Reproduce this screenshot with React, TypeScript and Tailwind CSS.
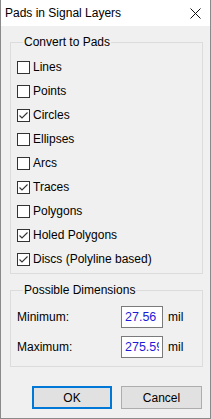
import React from 'react';

const font = { fontFamily: '"Liberation Sans", Arial, sans-serif' };

const options: { label: string; checked: boolean }[] = [
  { label: 'Lines', checked: false },
  { label: 'Points', checked: false },
  { label: 'Circles', checked: true },
  { label: 'Ellipses', checked: false },
  { label: 'Arcs', checked: false },
  { label: 'Traces', checked: true },
  { label: 'Polygons', checked: false },
  { label: 'Holed Polygons', checked: true },
  { label: 'Discs (Polyline based)', checked: true },
];

const CheckBox: React.FC<{ checked: boolean }> = ({ checked }) => (
  <span className="w-[13px] h-[13px] border border-[#333333] bg-white flex items-center justify-center shrink-0">
    {checked && (
      <svg width="11" height="11" viewBox="0 0 11 11">
        <path d="M1.5 5.5 L4 8 L9.5 2.5" fill="none" stroke="#333333" strokeWidth="1.1" />
      </svg>
    )}
  </span>
);

const DimRow: React.FC<{ label: string; value: string }> = ({ label, value }) => (
  <div className="flex items-center h-[22px]">
    <span className="w-[104px] text-[12px] text-black">{label}</span>
    <div className="w-[42px] h-[22px] border border-[#7a7a7a] bg-white flex items-center">
      <div className="ml-[3px] w-[34px] overflow-hidden whitespace-nowrap text-[12.5px] text-[#1c1cd6]">{value}</div>
    </div>
    <span className="ml-[5px] text-[12px] text-black">mil</span>
  </div>
);

export default function App() {
  return (
    <div
      className="w-[211px] h-[419px] flex flex-col border-x border-b border-[#8a8a8a] bg-[#f0f0f0] select-none"
      style={font}
    >
      {/* title bar */}
      <div className="h-[26px] bg-white flex items-center justify-between pl-[4px] pr-[9px] shrink-0">
        <span className="text-[12px] text-black">Pads in Signal Layers</span>
        <svg width="11" height="11" viewBox="0 0 11 11">
          <path d="M0.5 0.5 L10.5 10.5 M10.5 0.5 L0.5 10.5" stroke="#111" strokeWidth="1" />
        </svg>
      </div>

      <fieldset className="mt-[8px] ml-[9px] mr-[7px] border border-[#dcdcdc] pl-[6px] pb-[2px]">
        <legend className="ml-[6px] px-[1px] text-[12px] leading-[16px] text-black">Convert to Pads</legend>
        <div className="flex flex-col pt-[5px]">
          {options.map((o) => (
            <div key={o.label} className="h-[24px] flex items-center gap-[3px]">
              <CheckBox checked={o.checked} />
              <span className="text-[12px] text-black">{o.label}</span>
            </div>
          ))}
        </div>
      </fieldset>

      <fieldset className="mt-[8px] ml-[9px] mr-[7px] border border-[#dcdcdc] pl-[6px] pb-[8px]">
        <legend className="ml-[6px] px-[1px] text-[12px] leading-[16px] text-black">Possible Dimensions</legend>
        <div className="flex flex-col gap-[8px] pt-[8px]">
          <DimRow label="Minimum:" value="27.56" />
          <DimRow label="Maximum:" value="275.59" />
        </div>
      </fieldset>

      <div className="mt-[19px] flex justify-end gap-[9px] pr-[8px]">
        <button className="w-[80px] h-[23px] border-2 border-[#0078d7] bg-[#e1e1e1] text-[12px] text-black">OK</button>
        <button className="w-[81px] h-[23px] border border-[#adadad] bg-[#e1e1e1] text-[12px] text-black">Cancel</button>
      </div>
    </div>
  );
}
